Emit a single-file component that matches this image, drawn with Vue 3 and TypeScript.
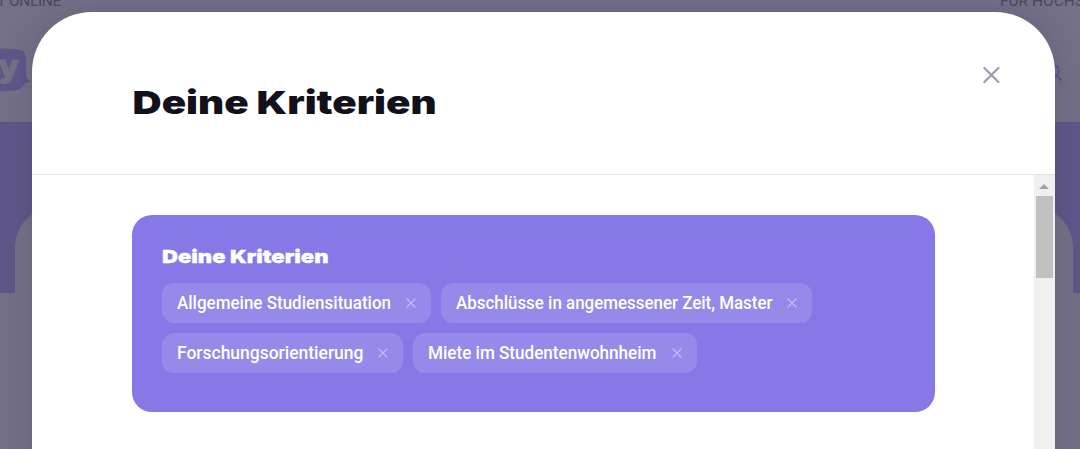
<template>
    <div class="screen">
        <div class="page">
            <div class="topbar">
                <span class="top-left">T ONLINE</span>
                <span class="top-right">FÜR HOCHS</span>
            </div>
            <div class="navbar">
                <svg class="logo" width="34" height="50" viewBox="0 0 34 50">
                    <path d="M0 3.5C8 3.5 15 4 20 5Q25 6 26 12V31Q27 35 31 36Q28 38 25 38Q22 45 15 45.5Q8 46.5 0 46Z" fill="#5e5789" />
                    <text x="-1.5" y="32" class="logo-letter" textLength="20.5" lengthAdjust="spacingAndGlyphs">y</text>
                </svg>
                <svg class="search" width="20" height="20" viewBox="0 0 20 20">
                    <circle cx="8.5" cy="8" r="6.2" />
                    <path d="M13 13L17.5 17.5" />
                </svg>
            </div>
            <div class="hero">
                <div class="hero-panel"></div>
            </div>
        </div>

        <div class="modal">
            <header class="modal-header">
                <svg class="title" width="320" height="50" role="heading">
                    <text x="0.6" y="37" textLength="304" lengthAdjust="spacingAndGlyphs">Deine Kriterien</text>
                </svg>
                <button class="close" aria-label="Schließen">
                    <svg width="18" height="18" viewBox="0 0 18 18">
                        <path d="M2.4 2L16.4 16M16.4 2L2.4 16" />
                    </svg>
                </button>
            </header>
            <div class="modal-body">
                <div class="body-content">
                    <section class="card">
                        <svg class="card-title" width="200" height="28" role="heading">
                            <text x="0" y="17.5" textLength="166.5" lengthAdjust="spacingAndGlyphs">Deine Kriterien</text>
                        </svg>
                        <div class="chips">
                            <div v-for="item in criteria" :key="item.label" class="chip">
                                <svg class="chip-label" :width="item.width" height="40">
                                    <text x="0" y="26" :textLength="item.width" lengthAdjust="spacingAndGlyphs">{{ item.label }}</text>
                                </svg>
                                <button class="remove" @click="remove(item.label)">
                                    <svg width="10" height="10" viewBox="0 0 10 10">
                                        <path d="M.7 .7L9.3 9.3M9.3 .7L.7 9.3" />
                                    </svg>
                                </button>
                            </div>
                        </div>
                    </section>
                </div>
                <div class="scrollbar">
                    <svg class="arrow" width="10" height="5" viewBox="0 0 10 5">
                        <path d="M0 5L5 0L10 5Z" />
                    </svg>
                    <div class="thumb"></div>
                </div>
            </div>
        </div>
    </div>
</template>

<script setup lang="ts">
import { ref } from 'vue'

interface Criterion {
    label: string
    width: number
}

const criteria = ref<Criterion[]>([
    { label: 'Allgemeine Studiensituation', width: 214 },
    { label: 'Abschlüsse in angemessener Zeit, Master', width: 316.5 },
    { label: 'Forschungsorientierung', width: 186.4 },
    { label: 'Miete im Studentenwohnheim', width: 228.5 }
])

function remove(label: string) {
    criteria.value = criteria.value.filter(c => c.label !== label)
}
</script>

<style>
body {
    overflow: hidden;
}
</style>

<style scoped>
.screen {
    position: relative;
    width: 1080px;
    height: 449px;
    overflow: hidden;
    background-color: #737088;
    font-family: Roboto, "Liberation Sans", sans-serif;
}

.topbar {
    display: flex;
    justify-content: space-between;
    height: 45px;
    font-size: 15.5px;
    letter-spacing: -0.35px;
    line-height: 18px;
    color: #4c4961;
    white-space: nowrap;
}

.topbar span {
    margin-top: -8px;
}

.top-left {
    width: 61px;
    display: flex;
    justify-content: flex-end;
}

.top-right {
    width: 80px;
    letter-spacing: 0;
}

.navbar {
    display: flex;
    justify-content: space-between;
    height: 77px;
    padding-right: 16px;
}

.logo-letter {
    font-family: Inter, sans-serif;
    font-size: 31px;
    font-weight: 900;
    fill: #737088;
    stroke: #737088;
    stroke-width: 0.8;
}

.search {
    margin-top: 18px;
    fill: none;
    stroke: #5e5789;
    stroke-width: 2.2;
}

.hero {
    height: 171px;
    margin-top: -0.5px;
    padding: 85px 7px 0 15px;
    box-sizing: border-box;
    background-color: #5e5789;
}

.hero-panel {
    height: 86px;
    border-radius: 40px 40px 0 0;
    background-color: #737088;
}

.modal {
    position: absolute;
    top: 11.5px;
    left: 32.4px;
    width: 1022.6px;
    height: 500px;
    border-radius: 60px 60px 0 0;
    overflow: hidden;
    background-color: #fff;
    box-shadow: 0 0 30px rgba(50, 45, 60, 0.22);
}

.modal-header {
    display: flex;
    justify-content: space-between;
    align-items: flex-start;
    height: 163.5px;
    box-sizing: border-box;
    padding: 65.5px 55px 0 100px;
    border-bottom: 1px solid #e3e3e5;
}

.title {
    font-family: Inter, sans-serif;
    font-size: 32px;
    font-weight: 900;
    fill: #12101a;
}

.close {
    margin-top: -11px;
    padding: 0;
    border: none;
    background: none;
    line-height: 0;
    cursor: pointer;
}

.close svg {
    fill: none;
    stroke: #a09dad;
    stroke-width: 2.4;
    stroke-linecap: round;
    overflow: visible;
}

.modal-body {
    display: flex;
    height: 337px;
}

.body-content {
    flex: 1;
    padding: 40px 99.4px 0 99.6px;
}

.card {
    height: 197px;
    padding: 30px;
    box-sizing: border-box;
    border-radius: 20px;
    background-color: #8678e6;
}

.card-title {
    display: block;
    font-family: Inter, sans-serif;
    font-size: 18px;
    font-weight: 900;
    fill: #fff;
    stroke: #fff;
    stroke-width: 0.3;
}

.chips {
    display: flex;
    flex-wrap: wrap;
    gap: 10px;
    margin-top: 9.6px;
}

.chip {
    display: flex;
    align-items: center;
    gap: 15px;
    height: 40px;
    padding: 0 15px;
    border-radius: 12px;
    background-color: #9589e9;
}

.chip-label {
    display: block;
    overflow: visible;
    font-size: 17.5px;
    font-weight: 500;
    fill: #fff;
}

.remove {
    padding: 0;
    border: none;
    background: none;
    line-height: 0;
    cursor: pointer;
}

.remove svg {
    fill: none;
    stroke: #c8c1f5;
    stroke-width: 1.2;
}

.scrollbar {
    display: flex;
    flex-direction: column;
    align-items: center;
    width: 21px;
    background-color: #f0f0f0;
}

.arrow {
    margin-top: 9px;
    fill: #a3a3a3;
}

.thumb {
    width: 17px;
    height: 82px;
    margin-top: 7px;
    background-color: #c1c1c1;
}
</style>
